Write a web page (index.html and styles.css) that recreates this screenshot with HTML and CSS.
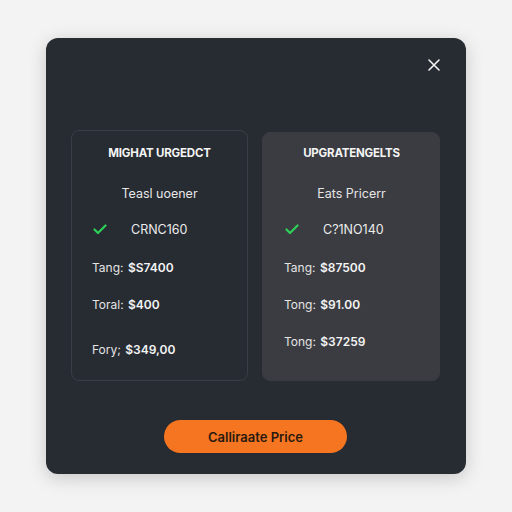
FILE: index.html
```html
<!DOCTYPE html>
<html lang="en">
<head>
  <meta charset="UTF-8" />
  <title>Calculate Price</title>
  <link rel="stylesheet" href="styles.css">
</head>
<body>

<div class="modal">
  <div class="modal-head">
    <button class="close-btn" aria-label="Close">
      <svg width="12" height="12" viewBox="0 0 12 12"><path d="M1 1 L11 11 M11 1 L1 11" stroke="#f2f2f2" stroke-width="1.6" stroke-linecap="round"/></svg>
    </button>
  </div>

  <div class="plans">
    <div class="plan">
      <div class="plan-title">MIGHAT URGEDCT</div>
      <div class="plan-sub">Teasl uoener</div>
      <div class="plan-check">
        <svg class="tick" width="14" height="11" viewBox="0 0 14 11"><path d="M1.5 5.5 L5 9 L12.5 1.5" fill="none" stroke="#2ed158" stroke-width="2.2" stroke-linecap="round" stroke-linejoin="round"/></svg>
        <span>CRNC160</span>
      </div>
      <div class="plan-row"><span class="lbl">Tang:</span> <b>$S7400</b></div>
      <div class="plan-row"><span class="lbl">Toral:</span> <b>$400</b></div>
      <div class="plan-row last"><span class="lbl">Fory;</span> <b>$349,00</b></div>
    </div>

    <div class="plan plan-active">
      <div class="plan-title">UPGRATENGELTS</div>
      <div class="plan-sub">Eats Pricerr</div>
      <div class="plan-check">
        <svg class="tick" width="14" height="11" viewBox="0 0 14 11"><path d="M1.5 5.5 L5 9 L12.5 1.5" fill="none" stroke="#2ed158" stroke-width="2.2" stroke-linecap="round" stroke-linejoin="round"/></svg>
        <span>C?1NO140</span>
      </div>
      <div class="plan-row"><span class="lbl">Tang:</span> <b>$87500</b></div>
      <div class="plan-row"><span class="lbl">Tong:</span> <b>$91.00</b></div>
      <div class="plan-row"><span class="lbl">Tong:</span> <b>$37259</b></div>
    </div>
  </div>

  <div class="modal-foot">
    <button class="calc-btn">Calliraate Price</button>
  </div>
</div>

</body>
</html>
```

FILE: styles.css
```css
body {
  font-family: Inter, "Noto Sans", sans-serif;
  background: #f3f3f3;
  color: #ececec;
  display: flex;
  justify-content: center;
  align-items: center;
  height: 100vh;
  margin: 0;
}

.modal {
  width: 420px;
  height: 436px;
  box-sizing: border-box;
  padding: 20px 26px 21px 25px;
  background: #272b32;
  border-radius: 12px;
  box-shadow: 0 4px 18px rgba(0, 0, 0, 0.18);
  display: flex;
  flex-direction: column;
}

.modal-head {
  height: 72px;
  display: flex;
  justify-content: flex-end;
  align-items: flex-start;
}

.close-btn {
  width: 12px;
  height: 14px;
  padding: 0;
  border: none;
  background: none;
  display: flex;
  align-items: center;
  justify-content: center;
  cursor: pointer;
}

.plans {
  display: flex;
  gap: 14px;
  height: 251px;
}

.plan {
  flex: 1;
  box-sizing: border-box;
  border: 1px solid #393d45;
  border-radius: 8px;
  padding: 14px 20px 0 20px;
  display: flex;
  flex-direction: column;
}

.plan-active {
  background: #3b3c41;
  border-color: #3b3c41;
  margin-top: 2px;
  padding-top: 12px;
  padding-left: 21px;
}

.plan-title {
  text-align: center;
  font-size: 11.5px;
  font-weight: 700;
  letter-spacing: -0.2px;
  line-height: 16px;
  color: #f4f4f4;
}

.plan-sub {
  text-align: center;
  font-size: 12.5px;
  line-height: 16px;
  margin-top: 25px;
  color: #e6e6e6;
}

.plan-check {
  display: flex;
  align-items: center;
  margin-top: 19px;
  height: 16px;
  font-size: 12.5px;
  color: #ececec;
}

.plan-check .tick {
  margin-left: 1px;
  margin-right: 24px;
}

.plan-row {
  margin-top: 21px;
  font-size: 12px;
  line-height: 16px;
  color: #e4e4e4;
}

.plan-check + .plan-row {
  margin-top: 23px;
}

.plan-row .lbl {
  margin-right: 1px;
}

.plan-row b {
  font-weight: 600;
  color: #f4f4f4;
}

.plan-row.last {
  margin-top: 29px;
}

.modal-foot {
  margin-top: 39px;
  display: flex;
  justify-content: center;
}

.calc-btn {
  width: 183px;
  height: 33px;
  border: none;
  border-radius: 17px;
  background: #f57520;
  color: #2a1a10;
  font-family: Inter, "Noto Sans", sans-serif;
  font-size: 13px;
  font-weight: 600;
  cursor: pointer;
}

.calc-btn:hover {
  background: #ff8534;
}
```
